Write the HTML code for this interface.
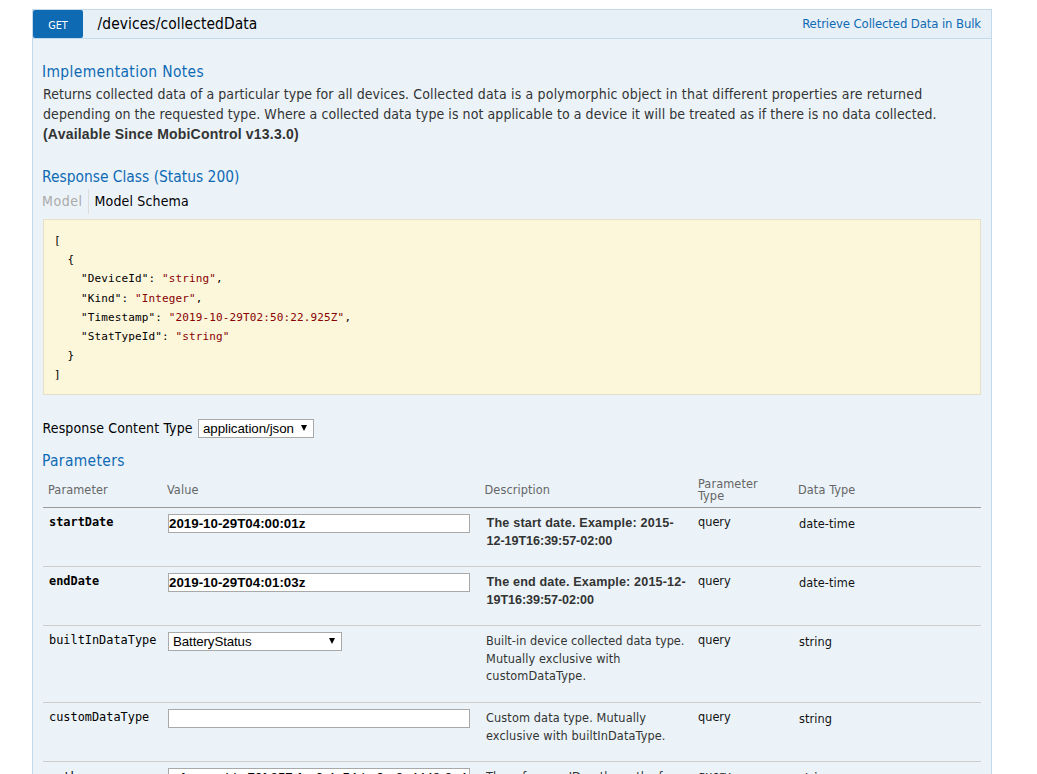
<!DOCTYPE html>
<html><head><meta charset="utf-8">
<style>
*{box-sizing:border-box}
html,body{margin:0;padding:0;background:#fff}
body{width:1037px;height:774px;overflow:hidden;position:relative;font-family:"DejaVu Sans Condensed","Liberation Sans",sans-serif;color:#000;line-height:1}
#wrap{position:absolute;left:32px;top:9px;width:960px}
.heading{height:30px;border:1px solid #c3d9ec;background:#e7f0f7;position:relative}
.get{position:absolute;left:0;top:0;width:50px;height:28px;background:#0f6ab4;color:#fff;border-radius:2px;font-size:10.8px;text-align:center;line-height:28px;padding-top:2px}
.path{letter-spacing:.1px;position:absolute;left:64.5px;top:0;font-size:15.4px;line-height:28px;color:#000;white-space:nowrap}
.opt{letter-spacing:-.11px;position:absolute;right:10px;top:0;font-size:13px;line-height:28px;color:#0f6ab4;white-space:nowrap}
.content{border:1px solid #c3d9ec;border-top:none;background:#ebf3f9;padding:0 10px;height:800px;position:relative}
h4{margin:0;font-weight:normal;color:#0f6ab4;font-size:15.4px;line-height:18px;white-space:nowrap;position:absolute;left:10px}
p{margin:0;font-size:14px;line-height:20px;color:#333;position:absolute;left:10px;top:45px;white-space:nowrap;letter-spacing:.125px}
p b{font-family:"Liberation Sans",sans-serif;letter-spacing:.2px}
.tabs{position:absolute;left:10px;top:180px;font-size:14px;line-height:25px;height:25px;white-space:nowrap}
.tabs .m{color:#aaa;display:inline-block;letter-spacing:.55px;margin-left:-1px;padding-right:5px;border-right:1px solid #ddd}
.tabs .s{color:#000;display:inline-block;padding-left:6px;letter-spacing:.15px}
pre{position:absolute;left:10px;top:180px;width:938px;margin:0;background:#fcf6db;border:1px solid #e5e0c6;height:175.6px;padding:11px 10px 9px;font-family:"DejaVu Sans Mono","Liberation Mono",monospace;font-size:11px;letter-spacing:.13px;line-height:19.2px;color:#000}
pre b{font-weight:normal;color:#800}
.rct{letter-spacing:.14px;position:absolute;left:9.5px;top:378px;font-size:14px;height:22px;line-height:22px;color:#000;white-space:nowrap}
.sel{position:absolute;border:1px solid #a9a9a9;background:#fff;height:19px;line-height:17px;font-size:13.33px;padding:0 0 0 4px;font-family:"Liberation Sans",sans-serif;color:#000;white-space:nowrap}
.sel i{position:absolute;right:6px;top:5px;width:0;height:0;border-left:3.7px solid transparent;border-right:3.7px solid transparent;border-top:6px solid #000}
.inp{position:absolute;left:135px;width:302px;height:19px;border:1px solid #a9a9a9;background:#fff;font:bold 13.33px/17px "Liberation Sans",sans-serif;padding-left:0;color:#000;white-space:nowrap;overflow:hidden}
.th{position:absolute;font-size:12.6px;letter-spacing:.1px;color:#666;white-space:nowrap;line-height:12px}
.hr{position:absolute;left:10px;width:938px;height:1px;background:#ccc}
.pn{position:absolute;left:16px;font:11.9px/14px "DejaVu Sans Mono","Liberation Mono",monospace;color:#000;white-space:nowrap}
.pn.b{font-weight:bold}
.d{position:absolute;left:453px;font-size:12.6px;line-height:17.7px;letter-spacing:.03px;color:#333;white-space:nowrap}
.d.b{font-weight:bold;font-family:"Liberation Sans",sans-serif;letter-spacing:.2px;margin-left:.5px}
.q{position:absolute;left:665px;font-size:12.6px;line-height:18px;color:#111;white-space:nowrap}
.t{position:absolute;left:766px;font-size:12.6px;line-height:18px;letter-spacing:.08px;color:#111;white-space:nowrap}
</style></head><body>
<div id="wrap">
<div class="heading"><div class="get">GET</div><div class="path">/devices/collectedData</div><div class="opt">Retrieve Collected Data in Bulk</div></div>
<div class="content">
<h4 style="top:24px;letter-spacing:.39px;left:9px">Implementation Notes</h4>
<p><span style="letter-spacing:.065px">Returns collected data of a particular type for all devices. </span><span style="letter-spacing:.171px">Collected data is a polymorphic object in that different properties are returned</span><br><span style="letter-spacing:.07px">depending on the requested type. Where a collected data type is not applicable to a device it will be treated as if there is no data collected.</span><br><b>(Available Since MobiControl v13.3.0)</b></p>
<h4 style="top:129px;left:9px">Response Class (Status 200)</h4>
<div class="tabs" style="top:150px"><span class="m">Model</span><span class="s">Model Schema</span></div>
<pre>[
  {
    "DeviceId": <b>"string"</b>,
    "Kind": <b>"Integer"</b>,
    "Timestamp": <b>"2019-10-29T02:50:22.925Z"</b>,
    "StatTypeId": <b>"string"</b>
  }
]</pre>
<div class="rct">Response Content Type</div>
<div class="sel" style="left:165px;top:380px;width:116px;letter-spacing:-.06px">application/json<i></i></div>
<h4 style="top:413px;left:9px;letter-spacing:.36px">Parameters</h4>

<div class="th" style="left:15px;top:445px">Parameter</div>
<div class="th" style="left:134px;top:445px">Value</div>
<div class="th" style="left:451.5px;top:445px">Description</div>
<div class="th" style="left:665px;top:439px">Parameter<br>Type</div>
<div class="th" style="left:765px;top:445px">Data Type</div>
<div class="hr" style="top:468px;background:#999"></div>

<div class="pn b" style="top:476px">startDate</div>
<div class="inp" style="top:475px">2019-10-29T04:00:01z</div>
<div class="d b" style="top:476px">The start date. Example: 2015-<br><span style="letter-spacing:-.05px">12-19T16:39:57-02:00</span></div>
<div class="q" style="top:474px">query</div><div class="t" style="top:476px">date-time</div>
<div class="hr" style="top:527px"></div>

<div class="pn b" style="top:535px">endDate</div>
<div class="inp" style="top:534px">2019-10-29T04:01:03z</div>
<div class="d b" style="top:535px"><span style="letter-spacing:.15px">The end date. Example: 2015-12-</span><br><span style="letter-spacing:-.06px">19T16:39:57-02:00</span></div>
<div class="q" style="top:533px">query</div><div class="t" style="top:535px">date-time</div>
<div class="hr" style="top:586px"></div>

<div class="pn" style="top:594px">builtInDataType</div>
<div class="sel" style="left:135px;top:593px;width:174px;letter-spacing:-.12px">BatteryStatus<i></i></div>
<div class="d" style="top:593px">Built-in device collected data type.<br><span style="letter-spacing:.1px">Mutually exclusive with</span><br><span style="letter-spacing:.13px">customDataType.</span></div>
<div class="q" style="top:592px">query</div><div class="t" style="top:594px">string</div>
<div class="hr" style="top:663px"></div>

<div class="pn" style="top:671px">customDataType</div>
<div class="inp" style="top:670px"></div>
<div class="d" style="top:670px"><span style="letter-spacing:.11px">Custom data type. Mutually</span><br><span style="letter-spacing:.12px">exclusive with builtInDataType.</span></div>
<div class="q" style="top:669px">query</div><div class="t" style="top:671px">string</div>
<div class="hr" style="top:722px"></div>

<div class="pn" style="top:731px">path</div>
<div class="inp" style="top:729px;font-weight:normal">referenceId:a79f-857-fae0-4e54-ba9e-8a4448-8e4</div>
<div class="d" style="top:729px">The reference ID or the path of</div>
<div class="q" style="top:728px">query</div><div class="t" style="top:730px">string</div>
</div>
</div>
</body></html>
